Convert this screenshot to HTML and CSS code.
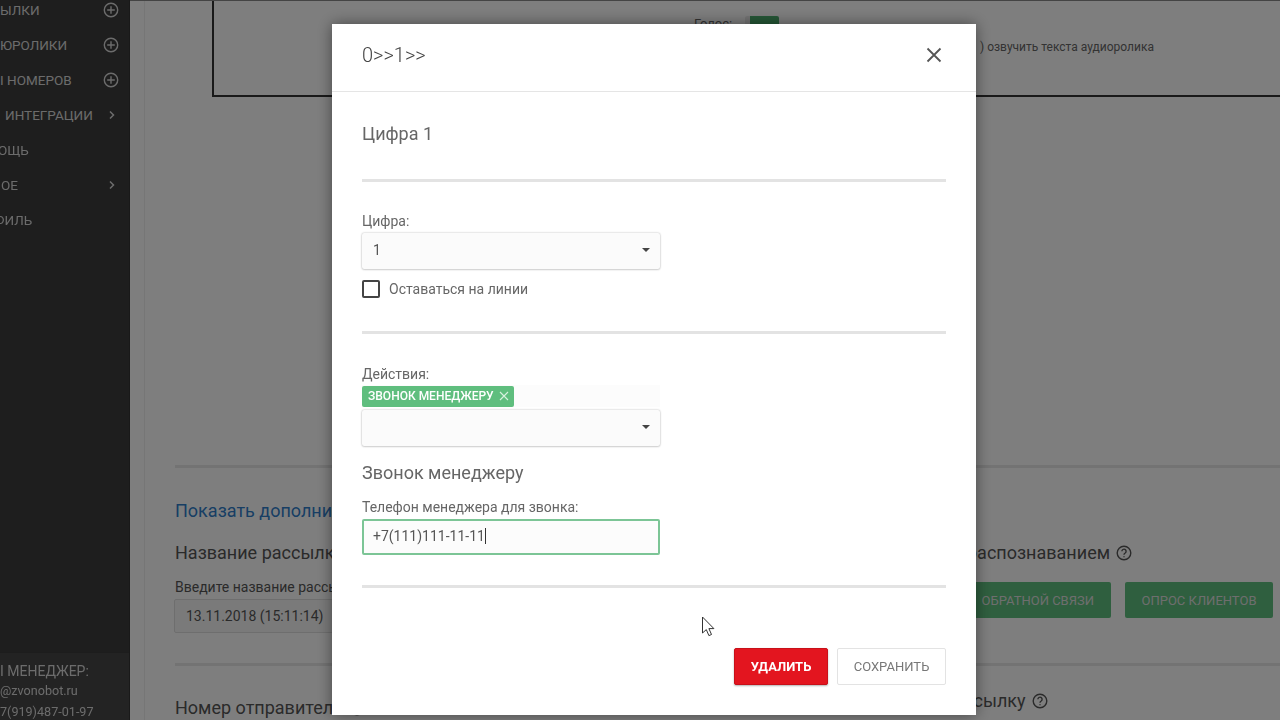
FILE: index.html
```html
<!DOCTYPE html>
<html lang="ru">
<head>
<meta charset="utf-8">
<title>0>>1>></title>
<link rel="stylesheet" href="styles.css">
</head>
<body>
<div class="app">
  <aside class="sidebar">
    <nav class="menu">
      <div class="menu-item"><span>ЫЛКИ</span><svg class="plus" viewBox="0 0 16 16"><circle cx="8" cy="8" r="6.7"/><path d="M8 4.2v7.6M4.2 8h7.6"/></svg></div>
      <div class="menu-item"><span>ЮРОЛИКИ</span><svg class="plus" viewBox="0 0 16 16"><circle cx="8" cy="8" r="6.7"/><path d="M8 4.2v7.6M4.2 8h7.6"/></svg></div>
      <div class="menu-item"><span>І НОМЕРОВ</span><svg class="plus" viewBox="0 0 16 16"><circle cx="8" cy="8" r="6.7"/><path d="M8 4.2v7.6M4.2 8h7.6"/></svg></div>
      <div class="menu-item"><span>ИНТЕГРАЦИИ</span><svg class="chev" viewBox="0 0 8 10"><path d="M2 1.5 5.5 5 2 8.5"/></svg></div>
      <div class="menu-item"><span>ОЩЬ</span></div>
      <div class="menu-item"><span>ОЕ</span><svg class="chev" viewBox="0 0 8 10"><path d="M2 1.5 5.5 5 2 8.5"/></svg></div>
      <div class="menu-item"><span>ФИЛЬ</span></div>
    </nav>
    <div class="manager">
      <div class="m-title">І МЕНЕДЖЕР:</div>
      <div class="m-line">@zvonobot.ru</div>
      <div class="m-line">7(919)487-01-97</div>
    </div>
  </aside>
  <main class="page">
    <div class="voice-box">
      <div class="voice-row"><span>Голос:</span><span class="toggle"></span></div>
      <div class="voice-note">) озвучить текста аудиоролика</div>
    </div>
    <div class="lower">
      <hr class="bg-rule">
      <a class="bg-link">Показать дополни</a>
      <div class="columns">
        <div class="col-left">
          <h3 class="bg-h">Название рассылки</h3>
          <div class="bg-label">Введите название рассылки</div>
          <div class="bg-input">13.11.2018 (15:11:14)</div>
        </div>
        <div class="col-right">
          <h3 class="bg-h recognition">распознаванием <svg class="help" viewBox="0 0 16 16"><circle cx="8" cy="8" r="6.8"/><path d="M5.9 6.3a2.1 2.1 0 1 1 3.3 1.7c-.8.5-1.2 1-1.2 1.8M8 11.2v1"/></svg></h3>
          <div class="bg-buttons"><span class="bg-btn wide">ОБРАТНОЙ СВЯЗИ</span><span class="bg-btn">ОПРОС КЛИЕНТОВ</span></div>
        </div>
      </div>
      <hr class="bg-rule second">
      <div class="columns last">
        <h3 class="bg-h sender">Номер отправителя <svg class="help" viewBox="0 0 16 16"><circle cx="8" cy="8" r="6.8"/><path d="M5.9 6.3a2.1 2.1 0 1 1 3.3 1.7c-.8.5-1.2 1-1.2 1.8M8 11.2v1"/></svg></h3>
        <h3 class="bg-h enable">Включить рассылку <svg class="help" viewBox="0 0 16 16"><circle cx="8" cy="8" r="6.8"/><path d="M5.9 6.3a2.1 2.1 0 1 1 3.3 1.7c-.8.5-1.2 1-1.2 1.8M8 11.2v1"/></svg></h3>
      </div>
    </div>
  </main>
</div>
<div class="overlay"></div>
<section class="modal">
  <header class="modal-head">
    <span class="modal-title">0&gt;&gt;1&gt;&gt;</span>
    <svg class="close" viewBox="0 0 16 16"><path d="M1.5 1.5 14.5 14.5M14.5 1.5 1.5 14.5"/></svg>
  </header>
  <div class="modal-body">
    <h2 class="section-title">Цифра 1</h2>
    <hr class="rule">
    <label class="label first">Цифра:</label>
    <div class="select"><span>1</span><i class="caret"></i></div>
    <div class="check-row"><span class="check"></span><span>Оставаться на линии</span></div>
    <hr class="rule r2">
    <label class="label second">Действия:</label>
    <div class="tags"><span class="tag">ЗВОНОК МЕНЕДЖЕРУ <svg class="tag-x" viewBox="0 0 10 10"><path d="M1 1l8 8M9 1 1 9"/></svg></span></div>
    <div class="select empty"><i class="caret"></i></div>
    <h2 class="sub-title">Звонок менеджеру</h2>
    <label class="label third">Телефон менеджера для звонка:</label>
    <div class="input">+7(111)111-11-11<span class="cursor"></span></div>
    <hr class="rule r3">
    <div class="actions">
      <button class="btn danger">УДАЛИТЬ</button>
      <button class="btn plain">СОХРАНИТЬ</button>
    </div>
  </div>
</section>
<svg class="pointer" viewBox="0 0 14 22"><path d="M1.5 1v16l3.8-3.4 2.6 6 2.6-1.1-2.6-5.9h5z"/></svg>
</body>
</html>
```
FILE: styles.css
```css
* { box-sizing: border-box; }
html, body { margin: 0; height: 100%; overflow: hidden; }
body { font-family: Roboto, "Liberation Sans", sans-serif; color: #555; background: #fff; }
h2, h3 { margin: 0; font-weight: 400; }
hr { border: 0; margin: 0; }

.app { display: flex; width: 1280px; height: 720px; filter: blur(.5px); }
.sidebar { width: 130px; flex: none; background: #3c3c3c; display: flex; flex-direction: column; justify-content: space-between; color: #d8d8d8; border-right: 1px solid #333; }
.menu { margin-top: -8px; }
.menu-item { height: 35px; font-size: 13.5px; display: flex; align-items: center; justify-content: space-between; padding-right: 10px; white-space: nowrap; }
.menu-item:nth-child(4) { padding-left: 5px; }
.menu-item:nth-child(5) span { margin-left: -2px; }
.menu-item:nth-child(6) span { margin-left: 1px; }
.menu-item:nth-child(7) span { margin-left: -6px; }
.plus { width: 16px; height: 16px; fill: none; stroke: #d8d8d8; stroke-width: 1.4; }
.chev { width: 8px; height: 10px; margin-right: 3px; fill: none; stroke: #d8d8d8; stroke-width: 1.5; }
.manager { height: 68px; background: #464646; padding-top: 9px; border-top: 1px solid #3a3a3a; }
.m-title { font-size: 14px; line-height: 18px; }
.m-line { font-size: 12.6px; line-height: 21px; }

.page { flex: 1; background: linear-gradient(90deg, #fdfdfd 14px, #ececec 14px, #ececec 15px, #fdfdfd 15px); padding-left: 82px; position: relative; min-width: 0; border-top: 1px solid #888; }
.voice-box { width: 1068px; height: 96px; border: solid #333; border-width: 0 0 2px 2px; position: relative; color: #666; font-size: 12px; }
.voice-row { position: absolute; left: 480px; top: 15px; display: flex; gap: 13px; font-size: 13px; }
.toggle { width: 34px; height: 20px; background: #4caf6e; border-left: 5px solid #e8e8e8; border-radius: 2px; }
.voice-note { position: absolute; left: 766px; top: 39px; }

.lower { margin-left: -37px; margin-top: 368px; width: 1105px; }
.bg-rule { height: 3px; background: #e6e6e6; }
.bg-link { display: block; margin-top: 31px; font-size: 18px; line-height: 24px; color: #2f7cc9; white-space: nowrap; }
.columns { display: flex; }
.col-left { width: 800px; flex: none; }
.col-right { flex: 1; min-width: 0; }
.bg-h { font-size: 18px; line-height: 24px; color: #555; white-space: nowrap; margin-top: 18px; display: flex; align-items: center; gap: 6px; }
.recognition { margin-left: -8px; }
.sender { margin-top: 30px; }
.enable { margin-top: 16px; margin-left: 490px; }
.bg-label { font-size: 14px; line-height: 18px; margin-top: 13px; white-space: nowrap; }
.bg-input { width: 300px; height: 34px; margin: 3px 0 0 -1px; padding: 0 11px 2px; line-height: 32px; font-size: 14px; border: 1px solid #ddd; background: #f5f5f5; border-radius: 2px; }
.help { width: 16px; height: 16px; fill: none; stroke: #555; stroke-width: 1.4; }
.bg-buttons { display: flex; gap: 14px; margin-top: 17px; margin-left: -24px; }
.bg-btn { height: 36px; width: 148px; flex: none; display: flex; align-items: center; justify-content: center; background: #5fbe7e; color: #ddd; border-radius: 2px; font-size: 13px; }
.bg-btn.wide { width: 160px; justify-content: flex-end; padding-right: 17px; }
.bg-rule.second { margin-top: 30px; }
.last { justify-content: flex-start; }

.overlay { position: fixed; inset: 0; background: rgba(0,0,0,.5); }
.modal { position: fixed; left: 332px; top: 24px; width: 644px; height: 691px; background: #fff; box-shadow: 0 0 14px rgba(0,0,0,.45); }
.modal-head { height: 68px; border-bottom: 1px solid #e5e5e5; padding: 0 34px 5px 30px; display: flex; align-items: center; justify-content: space-between; }
.modal-title { font-size: 20px; font-weight: 300; color: #444; }
.close { width: 16px; height: 16px; fill: none; stroke: #555; stroke-width: 1.8; }
.modal-body { padding: 0 30px; }
.section-title { font-size: 18px; line-height: 24px; margin-top: 30px; color: #666; }
.rule { height: 3px; background: #e3e3e3; margin-top: 33px; }
.label { display: block; font-size: 14px; line-height: 18px; color: #666; }
.label.first { margin-top: 30px; }
.select { width: 298px; height: 36px; margin-top: 3px; padding: 0 10px 2px 11px; display: flex; align-items: center; justify-content: space-between; font-size: 14px; border-radius: 2px; background: #fbfbfb; box-shadow: 0 0 2px rgba(0,0,0,.3), 0 1px 2px rgba(0,0,0,.12); color: #555; }
.caret { margin-left: auto; width: 0; height: 0; border-left: 4px solid transparent; border-right: 4px solid transparent; border-top: 4px solid #444; }
.check-row { display: flex; align-items: center; gap: 9px; margin-top: 11px; font-size: 14px; color: #666; height: 18px; }
.check { width: 18px; height: 18px; border: 2px solid #444; border-radius: 2px; }
.rule.r2 { margin-top: 33px; }
.label.second { margin-top: 31px; }
.tags { width: 298px; height: 22px; margin-top: 2px; background: #fcfcfc; }
.tag { display: inline-flex; align-items: center; gap: 5px; height: 21px; padding: 0 5px 0 6px; background: #5fbe7e; color: #fff; font-size: 12px; font-weight: 500; border-radius: 2px; }
.tag-x { width: 10px; height: 10px; fill: none; stroke: #d8f0df; stroke-width: 1.1; }
.select.empty { margin-top: 3px; }
.sub-title { font-size: 18px; line-height: 24px; margin-top: 15px; color: #666; }
.label.third { margin-top: 13px; }
.input { width: 298px; height: 36px; margin-top: 3px; padding: 0 9px 2px; display: flex; align-items: center; font-size: 14px; color: #555; background: #fcfcfc; border: 2px solid #7cc596; border-radius: 2px; }
.cursor { width: 1px; height: 16px; background: #333; }
.rule.r3 { margin-top: 30px; }
.actions { display: flex; justify-content: flex-end; gap: 9px; margin-top: 60px; }
.btn { height: 37px; font: 500 13px Roboto, "Liberation Sans", sans-serif; border-radius: 2px; padding: 0; }
.danger { width: 94px; background: #e3151f; color: #fff; border: 1px solid #c81019; box-shadow: 0 1px 2px rgba(0,0,0,.3); font-weight: 700; }
.plain { width: 109px; background: #fff; color: #777; border: 1px solid #e3e3e3; font-weight: 400; }

.pointer { position: fixed; left: 701px; top: 616px; width: 14px; height: 22px; fill: #fff; stroke: #333; stroke-width: 1; }
```
